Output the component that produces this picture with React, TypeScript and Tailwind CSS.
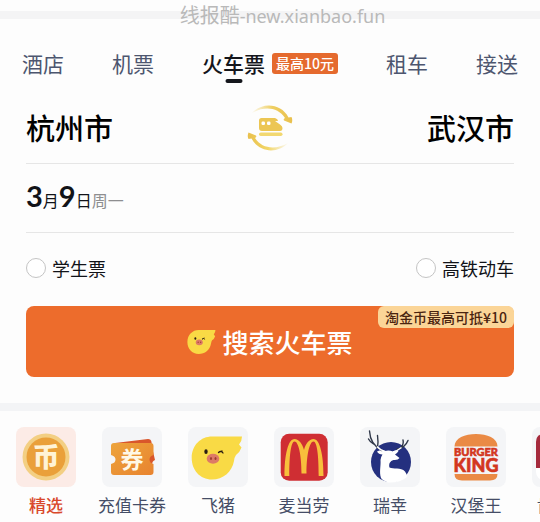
import { useState, type ReactNode } from 'react';

const TABS = [
  { id: 'hotel', label: '酒店' },
  { id: 'flight', label: '机票' },
  { id: 'train', label: '火车票', badge: '最高10元' },
  { id: 'car', label: '租车' },
  { id: 'transfer', label: '接送' },
];

const BRANDS: { label: string; icon: ReactNode; tile: string }[] = [
  { label: '精选', icon: <CoinIcon />, tile: 'bg-[#fcebe6]' },
  { label: '充值卡券', icon: <CouponIcon />, tile: 'bg-[#f4f5f7]' },
  { label: '飞猪', icon: <PigIcon viewBox="0 0 60 60" className="size-full" />, tile: 'bg-[#f4f5f7]' },
  { label: '麦当劳', icon: <ArchesIcon />, tile: 'bg-[#f4f5f7]' },
  { label: '瑞幸', icon: <DeerIcon />, tile: 'bg-[#f4f5f7]' },
  { label: '汉堡王', icon: <BurgerIcon />, tile: 'bg-[#f4f5f7]' },
  { label: '肯德基', icon: <BucketIcon />, tile: 'bg-[#f4f5f7]' },
];

export default function App() {
  const [tab, setTab] = useState('train');
  const [brand, setBrand] = useState('精选');

  return (
    <div className="min-h-screen overflow-hidden bg-[#fdfdfd] pt-[11px] font-['Noto_Sans_CJK_SC',sans-serif] text-[#111318]">
      <div className="relative h-2 bg-[#f4f4f5]">
        <span className="absolute inset-x-0 -top-2 pl-[25px] text-center text-xl leading-6 whitespace-nowrap text-[#b9b9b9]">
          线报酷<span className="font-['Noto_Sans',sans-serif] text-lg leading-6">-new.xianbao.fun</span>
        </span>
      </div>

      <nav className="flex items-center justify-between px-[22px] pt-7">
        {TABS.map((t) => (
          <button
            key={t.id}
            onClick={() => setTab(t.id)}
            className="flex items-center gap-[7px] whitespace-nowrap"
          >
            <span
              className={
                tab === t.id
                  ? 'relative text-[21px] leading-8 font-medium text-[#14161c]'
                  : 'relative text-[21px] leading-8 text-[#4d566f]'
              }
            >
              {t.label}
              {tab === t.id && (
                <span className="absolute top-8 left-1/2 h-1 w-[17px] -translate-x-1/2 rounded-full bg-[#14161c]" />
              )}
            </span>
            {t.badge && (
              <span className="rounded-[3px] bg-[#e56a2e] px-1 text-[14px] leading-[21px] font-medium text-white">
                {t.badge}
              </span>
            )}
          </button>
        ))}
      </nav>

      <main className="px-[26px]">
        {/* Route */}
        <div className="flex h-[85px] items-center justify-between border-b border-[#e6e6e6] pt-[14px] text-[29px] font-medium text-black">
          <button>杭州市</button>
          <button aria-label="交换出发地和目的地">
            <SwapTrainIcon />
          </button>
          <button>武汉市</button>
        </div>

        {/* Date */}
        <button className="flex h-[69px] w-full items-baseline border-b border-[#e6e6e6] pt-3 text-left text-base leading-10">
          <span className="font-['Lato',sans-serif] text-[29px] font-bold">3</span>
          <span>月</span>
          <span className="font-['Lato',sans-serif] text-[29px] font-bold">9</span>
          <span>日</span>
          <span className="text-[#8e8e90]">周一</span>
        </button>

        {/* Ticket filters */}
        <div className="mb-1 flex h-[69px] items-center justify-between">
          <Option id="student" label="学生票" />
          <Option id="highspeed" label="高铁动车" />
        </div>

        <button className="relative flex h-[71px] w-full items-center justify-center gap-[6px] rounded-lg bg-[#ed6c2c] text-[26px] font-medium text-white">
          <PigIcon viewBox="3 8 52 46" className="h-[26px] w-[29px]" />
          搜索火车票
          <span className="absolute top-0 right-0 rounded-md bg-[#fbd597] px-[7px] text-[14px] leading-[22px] font-medium text-[#4a2410]">
            淘金币最高可抵¥10
          </span>
        </button>
      </main>

      <div className="mt-[26px] h-2 bg-[#f3f4f6]" />

      <ul className="flex pt-4 pl-[3px]">
        {BRANDS.map((b) => (
          <li key={b.label} className="w-[86px] shrink-0">
            <button onClick={() => setBrand(b.label)} className="flex w-full flex-col items-center gap-[6px]">
              <span className={`size-[60px] overflow-hidden rounded-lg ${b.tile}`}>{b.icon}</span>
              <span
                className={
                  brand === b.label
                    ? 'text-[17px] leading-6 font-medium text-[#d9482b]'
                    : 'text-[17px] leading-6 text-[#454d66]'
                }
              >
                {b.label}
              </span>
            </button>
          </li>
        ))}
      </ul>
    </div>
  );
}

function Option({ id, label }: { id: string; label: string }) {
  return (
    <label htmlFor={id} className="flex items-center gap-[6px] text-lg">
      <input
        id={id}
        type="checkbox"
        className="size-5 appearance-none rounded-full border border-[#c4c4c4] bg-white checked:border-[6px] checked:border-[#ed6c2c]"
      />
      {label}
    </label>
  );
}

function SwapTrainIcon() {
  return (
    <svg viewBox="0 0 46 46" className="size-[46px]">
      <defs>
        <linearGradient id="arcTop" x1="0" x2="1">
          <stop offset="0" stopColor="#f0d677" stopOpacity="0.1" />
          <stop offset="0.5" stopColor="#efcf62" />
          <stop offset="1" stopColor="#e9c04d" />
        </linearGradient>
        <linearGradient id="arcBottom" x1="1" x2="0">
          <stop offset="0" stopColor="#f0d677" stopOpacity="0.1" />
          <stop offset="0.5" stopColor="#f2d667" />
          <stop offset="1" stopColor="#e9c04d" />
        </linearGradient>
      </defs>
      <path d="M5 8C15 -3 34 -2 41.500 12.500L44.500 12Q46 15 44.500 18.500L37 15.500Q36 14 38 13C31 2 17 1 5 8Z" fill="url(#arcTop)" />
      <path d="M41 38C31 49 12 48 4.500 33.500L1.500 34Q0 31 1.500 27.500L9 30.500Q10 32 8 33C15 44 29 45 41 38Z" fill="url(#arcBottom)" />
      <path d="M14.500 13H28Q31 14 31 16H28L33 19.500Q35.500 21 35.500 23Q35.500 26 33 26H15Q12 26 12 23V15.500Q12 13 14.500 13Z" fill="#ecc654" />
      <rect x="12" y="27.500" width="23.500" height="3.500" rx="1.700" fill="#f2d870" />
      <rect x="14.500" y="16.500" width="3.500" height="3.500" rx="1.200" fill="#fff" />
      <rect x="20" y="16.500" width="3.500" height="3.500" rx="1.200" fill="#fff" />
    </svg>
  );
}

function PigIcon({ viewBox, className }: { viewBox: string; className: string }) {
  return (
    <svg viewBox={viewBox} className={className}>
      <path
        d="M24 9.500H54Q54 14 51 17.500L53.500 20.500Q52 25 48 28Q46.500 30 46 34C44 45 35 52.500 24 52.500C12 52.500 3.700 43 3.700 31C3.700 18 13 9.500 24 9.500Z"
        fill="#f9da45"
      />
      <ellipse cx="18" cy="24.700" rx="1.700" ry="2.400" fill="#2a1d12" />
      <path d="M30.500 25.500Q33 23 35 26M30.500 25.500L34 24" fill="none" stroke="#2a1d12" strokeWidth="1.300" strokeLinecap="round" />
      <ellipse cx="25" cy="31.700" rx="6.300" ry="5" fill="#dd7a66" />
      <ellipse cx="23" cy="31.500" rx="1" ry="1.500" fill="#9b3d2f" />
      <ellipse cx="27.500" cy="31.500" rx="1" ry="1.500" fill="#9b3d2f" />
    </svg>
  );
}

function CoinIcon() {
  return (
    <svg viewBox="0 0 60 60" className="size-full">
      <circle cx="30" cy="30" r="23.500" fill="#f3cf83" />
      <circle cx="30" cy="30" r="19.500" fill="#eaa03a" />
      <text x="30" y="40" textAnchor="middle" fontSize="27" fontWeight="900" fill="#fff3d6" fontFamily="Noto Sans CJK SC, sans-serif">
        币
      </text>
    </svg>
  );
}

function CouponIcon() {
  return (
    <svg viewBox="0 0 60 60" className="size-full">
      <defs>
        <linearGradient id="coupon" x1="0" x2="1" y2="1">
          <stop offset="0" stopColor="#eda43c" />
          <stop offset="1" stopColor="#e8832f" />
        </linearGradient>
      </defs>
      <path d="M13 16L46 12Q49 12 49.500 15L50 20L53 33Q50 34 50 38L40 30Z" fill="#d9562b" />
      <path
        d="M12 16H48.500Q51.500 16 51.500 19V28Q47.500 29 47.500 32.500T51.500 37V45Q51.500 48 48.500 48H12Q9 48 9 45V37Q13.500 36 13.500 32.500T9 28V19Q9 16 12 16Z"
        fill="url(#coupon)"
      />
      <text x="30" y="41" textAnchor="middle" fontSize="23" fontWeight="700" fill="#fff8e6" fontFamily="Noto Sans CJK SC, sans-serif">
        券
      </text>
    </svg>
  );
}

function ArchesIcon() {
  return (
    <svg viewBox="0 0 60 60" className="size-full">
      <rect x="6.700" y="6.700" width="47" height="47" rx="8.500" fill="#cf2e33" />
      <path
        d="M10.500 49C10.500 28 14 12 20.500 12C25 12 28.500 17 30 23C31.500 17 35 12 39.500 12C46 12 49.500 28 49.500 49H44.700C44.700 28 43 14.500 39.500 14.500C35.500 14.500 32.500 28 32.500 46.500H27.500C27.500 28 24.500 14.500 20.500 14.500C17 14.500 15.300 28 15.300 49Z"
        fill="#f8bf3c"
      />
    </svg>
  );
}

function DeerIcon() {
  return (
    <svg viewBox="0 0 60 60" className="size-full">
      <circle cx="31" cy="35" r="20" fill="#24307f" />
      <path
        d="M17 24.500Q21 22.500 25 24Q29 23 33 24.500Q36 23 38.500 24Q37 26.500 35 27.500L39.500 31Q38 33.500 33.500 33C30 34 28.500 37 29.500 40.500C33 42.500 41 40 45 44.500Q47 47 47 50Q40 56 28 55.500Q22 53 21 51C19 45 21 39 20.500 33Q20.500 30.500 22.500 27.500Q18.500 27.500 17 24.500Z"
        fill="#fff"
      />
      <path d="M22 23.500C15 20 10 14 9.500 4M17.500 20.500Q18.500 15 17.500 8.500M13.500 17Q10 15 8.500 12" fill="none" stroke="#30384a" strokeWidth="1.400" strokeLinecap="round" />
      <path d="M37 22Q45 21 48 13.500M41 20.500Q44 17 43 13" fill="none" stroke="#30384a" strokeWidth="1.400" strokeLinecap="round" />
      <path d="M26 25Q20 23 17 19.500M33 25Q38 23.500 41.500 20.500" fill="none" stroke="#fff" strokeWidth="1.400" />
    </svg>
  );
}

function BurgerIcon() {
  return (
    <svg viewBox="0 0 60 60" className="size-full">
      <path d="M8.500 19.500C8.500 11 19 7 30 7S51.500 11 51.500 19.500Z" fill="#ea8a45" />
      <path d="M8.500 47H51.500Q51.500 53.500 44 53.500H16Q8.500 53.500 8.500 47Z" fill="#ea8a45" />
      <text
        fill="#d3371f"
        stroke="#d3371f"
        strokeWidth="0.600"
        fontFamily="Lato, sans-serif"
        fontWeight="900"
        textAnchor="middle"
      >
        <tspan x="30" y="29" fontSize="11">BURGER</tspan>
        <tspan x="30" y="45" fontSize="18">KING</tspan>
      </text>
    </svg>
  );
}

function BucketIcon() {
  return (
    <svg viewBox="0 0 60 60" className="size-full">
      <rect x="4" y="7" width="52" height="46" rx="8" fill="#fff" />
      <path d="M12 7H48Q56 7 56 15V41H4V15Q4 7 12 7Z" fill="#a52a3c" />
      <path d="M24 12H36L34 41H26Z" fill="#fff" />
    </svg>
  );
}
